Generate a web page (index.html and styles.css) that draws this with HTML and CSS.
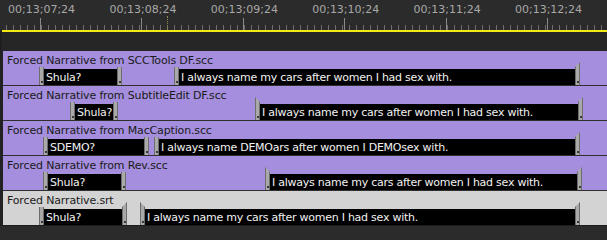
FILE: index.html
```html
<!DOCTYPE html>
<html>
<head>
<meta charset="utf-8">
<link rel="stylesheet" href="styles.css">
</head>
<body>
<div class="timeline">
  <div class="ruler">
    <div class="labels">
      <span class="tc">00;13;07;24</span>
      <span class="tc">00;13;08;24</span>
      <span class="tc">00;13;09;24</span>
      <span class="tc">00;13;10;24</span>
      <span class="tc">00;13;11;24</span>
      <span class="tc">00;13;12;24</span>
    </div>
    <div class="ticks"></div>
    <div class="playhead"></div>
  </div>
  <div class="cti-line"></div>
  <div class="gap"></div>
  <div class="tracks">
    <div class="track">
      <div class="track-name">Forced Narrative from SCCTools DF.scc</div>
      <div class="clip" style="left:36px"><i class="h"></i><span class="body" style="width:73px">Shula?</span><i class="h"></i></div>
      <div class="clip" style="left:171px"><i class="h"></i><span class="body" style="width:396px">I always name my cars after women I had sex with.</span><i class="h end"></i></div>
    </div>
    <div class="track">
      <div class="track-name">Forced Narrative from SubtitleEdit DF.scc</div>
      <div class="clip" style="left:67px"><i class="h"></i><span class="body" style="width:38px">Shula?</span><i class="h"></i></div>
      <div class="clip" style="left:252px"><i class="h start"></i><span class="body" style="width:318px">I always name my cars after women I had sex with.</span><i class="h end"></i></div>
    </div>
    <div class="track">
      <div class="track-name">Forced Narrative from MacCaption.scc</div>
      <div class="clip" style="left:40px"><i class="h"></i><span class="body" style="width:96px">SDEMO?</span><i class="h"></i></div>
      <div class="clip" style="left:151px"><i class="h"></i><span class="body" style="width:416px">I always name DEMOars after women I DEMOsex with.</span><i class="h end"></i></div>
    </div>
    <div class="track">
      <div class="track-name">Forced Narrative from Rev.scc</div>
      <div class="clip" style="left:40px"><i class="h"></i><span class="body" style="width:73px">Shula?</span><i class="h"></i></div>
      <div class="clip" style="left:262px"><i class="h start"></i><span class="body" style="width:307px">I always name my cars after women I had sex with.</span><i class="h end"></i></div>
    </div>
    <div class="track srt">
      <div class="track-name">Forced Narrative.srt</div>
      <div class="clip" style="left:36px"><i class="h"></i><span class="body" style="width:78px">Shula?</span><i class="h end"></i></div>
      <div class="clip" style="left:137px"><i class="h start"></i><span class="body" style="width:430px">I always name my cars after women I had sex with.</span><i class="h end"></i></div>
    </div>
  </div>
  <div class="footer"></div>
</div>
</body>
</html>
```
FILE: styles.css
```css
html, body {
  margin: 0;
  padding: 0;
  background: #262626;
  overflow: hidden;
}
.timeline {
  width: 607px;
  height: 240px;
  display: flex;
  flex-direction: column;
  font-family: "DejaVu Sans", "Liberation Sans", sans-serif;
  font-size: 11px;
}
.ruler {
  position: relative;
  height: 30px;
  background: #2b2b2b;
  display: flex;
  flex-direction: column;
}
.labels {
  display: flex;
  height: 18px;
}
.tc {
  flex: 0 0 101.4px;
  box-sizing: border-box;
  padding-left: 8px;
  padding-top: 3px;
  line-height: 13px;
  color: #a8a8a8;
  white-space: nowrap;
}
.ticks {
  height: 12px;
  background:
    repeating-linear-gradient(to right, transparent 0 40px, #8a8a8a 40px 41px, transparent 41px 101.4px) 0 0 / 100% 12px no-repeat,
    repeating-linear-gradient(to right, transparent 0 6px, #6e6e6e 6px 7px, transparent 7px 6.76px) 0 7px / 100% 5px no-repeat;
}
.playhead {
  position: absolute;
  left: 167px;
  top: 16px;
  height: 14px;
  width: 0;
  border-left: 1px dotted #8d8a4a;
}
.cti-line {
  height: 2px;
  margin-left: 2px;
  background: #f2ea10;
}
.gap {
  height: 19px;
  background: #262626;
  border-left: 2px solid #1f1f1f;
}
.tracks {
  display: flex;
  flex-direction: column;
  padding-left: 3px;
  background: #222;
}
.track {
  position: relative;
  height: 34px;
  border-bottom: 1px solid #2f2f2f;
  background: #a48edd;
}
.track.srt {
  background: #d3d3d3;
  border-bottom-color: #1c1c1c;
}
.track-name {
  padding: 3px 0 0 4px;
  line-height: 13px;
  color: #1a1a1a;
  letter-spacing: -0.15px;
  white-space: nowrap;
}
.clip {
  position: absolute;
  bottom: 0;
  display: flex;
  align-items: flex-end;
  height: 23px;
}
.body {
  display: block;
  box-sizing: border-box;
  height: 16px;
  background: #000;
  color: #f2f2f2;
  line-height: 17px;
  padding-left: 2px;
  letter-spacing: -0.25px;
  white-space: nowrap;
}
.h {
  position: relative;
  display: block;
  width: 5px;
  height: 18px;
  background: #a9a9a9;
  box-shadow: inset 1px 0 #6d6d6d, inset -1px 0 #6d6d6d;
}
.h::after {
  content: "";
  position: absolute;
  left: 2px;
  bottom: 2px;
  width: 2px;
  height: 2px;
  background: #3a3a3a;
}
.h.end {
  height: 23px;
  clip-path: polygon(0 5px, 100% 0, 100% 100%, 0 100%);
}
.h.start {
  height: 23px;
  clip-path: polygon(0 0, 100% 5px, 100% 100%, 0 100%);
}
.footer {
  flex: 1;
  background: #2b2b2b;
}
```
